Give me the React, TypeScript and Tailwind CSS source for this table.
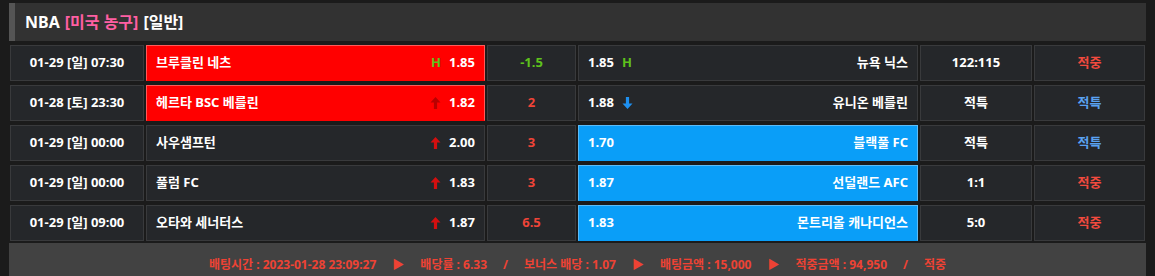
import type { ReactNode } from 'react';

type Pick = 'home' | 'away' | null;
type Mark = 'H' | 'up' | 'down' | null;
type Tone = 'dark' | 'red' | 'blue';

type Game = {
  date: string;
  home: string;
  homeOdds: string;
  homeMark: Mark;
  line: string;
  lineColor: string;
  away: string;
  awayOdds: string;
  awayMark: Mark;
  score: string;
  result: string;
  resultColor: string;
  pick: Pick;
};

const games: Game[] = [
  {
    date: '01-29 [일] 07:30',
    home: '브루클린 네츠',
    homeOdds: '1.85',
    homeMark: 'H',
    line: '-1.5',
    lineColor: 'text-[#5ec21c]',
    away: '뉴욕 닉스',
    awayOdds: '1.85',
    awayMark: 'H',
    score: '122:115',
    result: '적중',
    resultColor: 'text-[#f24a3e]',
    pick: 'home',
  },
  {
    date: '01-28 [토] 23:30',
    home: '헤르타 BSC 베를린',
    homeOdds: '1.82',
    homeMark: 'up',
    line: '2',
    lineColor: 'text-[#ef4438]',
    away: '유니온 베를린',
    awayOdds: '1.88',
    awayMark: 'down',
    score: '적특',
    result: '적특',
    resultColor: 'text-[#5aa2f2]',
    pick: 'home',
  },
  {
    date: '01-29 [일] 00:00',
    home: '사우샘프턴',
    homeOdds: '2.00',
    homeMark: 'up',
    line: '3',
    lineColor: 'text-[#ef4438]',
    away: '블랙풀 FC',
    awayOdds: '1.70',
    awayMark: null,
    score: '적특',
    result: '적특',
    resultColor: 'text-[#5aa2f2]',
    pick: 'away',
  },
  {
    date: '01-29 [일] 00:00',
    home: '풀럼 FC',
    homeOdds: '1.83',
    homeMark: 'up',
    line: '3',
    lineColor: 'text-[#ef4438]',
    away: '선덜랜드 AFC',
    awayOdds: '1.87',
    awayMark: null,
    score: '1:1',
    result: '적중',
    resultColor: 'text-[#f24a3e]',
    pick: 'away',
  },
  {
    date: '01-29 [일] 09:00',
    home: '오타와 세너터스',
    homeOdds: '1.87',
    homeMark: 'up',
    line: '6.5',
    lineColor: 'text-[#ef4438]',
    away: '몬트리올 캐나디언스',
    awayOdds: '1.83',
    awayMark: null,
    score: '5:0',
    result: '적중',
    resultColor: 'text-[#f24a3e]',
    pick: 'away',
  },
];

const toneClass: Record<Tone, string> = {
  dark: 'bg-[#25272a] border border-[#393a3c]',
  red: 'bg-[#ff0000] border border-[#ff5a5a] border-b-[#ff0000]',
  blue: 'bg-[#0a9ef8] border border-[#5cbcf8] border-b-[#0a9ef8]',
};

function Arrow({ dir, className }: { dir: 'up' | 'down'; className: string }) {
  return (
    <svg
      viewBox="0 0 10 12"
      className={`h-[12px] w-[11px] ${className} ${dir === 'down' ? 'rotate-180' : ''}`}
      fill="currentColor"
    >
      <path d="M5 0 L10 5.5 H6.6 V12 H3.4 V5.5 H0 Z" />
    </svg>
  );
}

function MarkIcon({ mark, onRed }: { mark: Mark; onRed?: boolean }) {
  if (mark === 'H') return <span className="text-[#5ec21c]">H</span>;
  if (mark === 'up')
    return <Arrow dir="up" className={onRed ? 'text-[#b80000]' : 'text-[#d40f0f]'} />;
  if (mark === 'down') return <Arrow dir="down" className="text-[#1e90f0]" />;
  return null;
}

function Cell({
  children,
  tone = 'dark',
  className = '',
}: {
  children: ReactNode;
  tone?: Tone;
  className?: string;
}) {
  return (
    <div className={`flex h-[36px] items-center ${toneClass[tone]} ${className}`}>
      {children}
    </div>
  );
}

function Row({ g }: { g: Game }) {
  return (
    <>
      <Cell className="justify-center">{g.date}</Cell>
      <Cell tone={g.pick === 'home' ? 'red' : 'dark'} className="justify-between px-[9px]">
        <span>{g.home}</span>
        <span className="flex items-center gap-[8px]">
          <MarkIcon mark={g.homeMark} onRed={g.pick === 'home'} />
          {g.homeOdds}
        </span>
      </Cell>
      <Cell className={`justify-center ${g.lineColor}`}>{g.line}</Cell>
      <Cell tone={g.pick === 'away' ? 'blue' : 'dark'} className="justify-between px-[9px]">
        <span className="flex items-center gap-[8px]">
          {g.awayOdds}
          <MarkIcon mark={g.awayMark} />
        </span>
        <span>{g.away}</span>
      </Cell>
      <Cell className="justify-center">{g.score}</Cell>
      <Cell className={`justify-center ${g.resultColor}`}>{g.result}</Cell>
    </>
  );
}

export default function App() {
  const footer: { text: string; sep?: boolean }[] = [
    { text: '배팅시간 : 2023-01-28 23:09:27' },
    { text: '▶', sep: true },
    { text: '배당률 : 6.33' },
    { text: '/', sep: true },
    { text: '보너스 배당 : 1.07' },
    { text: '▶', sep: true },
    { text: '배팅금액 : 15,000' },
    { text: '▶', sep: true },
    { text: '적중금액 : 94,950' },
    { text: '/', sep: true },
    { text: '적중' },
  ];

  return (
    <div className="min-h-screen w-full bg-[#1b1b1b] px-[9px] pt-[3px] font-['Noto_Sans','Noto_Sans_CJK_KR',sans-serif] text-[13px] font-bold text-white">
      {/* header */}
      <div className="flex h-[38px] items-center border-l-[6px] border-[#555555] bg-[#323232] pl-[10px] text-[16px]">
        <span>NBA</span>
        <span className="ml-[5px] text-[#ff5fa2]">[미국 농구]</span>
        <span className="ml-[5px]">[일반]</span>
      </div>

      {/* games */}
      <div className="mt-[4px] ml-[1px] grid grid-cols-[134px_339px_89px_340px_112px_111px] gap-x-[2px] gap-y-[4px]">
        {games.map((g, i) => (
          <Row key={i} g={g} />
        ))}
      </div>

      {/* bet summary */}
      <div className="mt-[2px] flex h-[44px] items-center justify-center gap-[12px] bg-[#424242] text-[12px] text-[#ee4234]">
        {footer.map((f, i) => (
          <span key={i} className={f.sep ? 'px-[4px]' : ''}>
            {f.text}
          </span>
        ))}
      </div>
    </div>
  );
}
